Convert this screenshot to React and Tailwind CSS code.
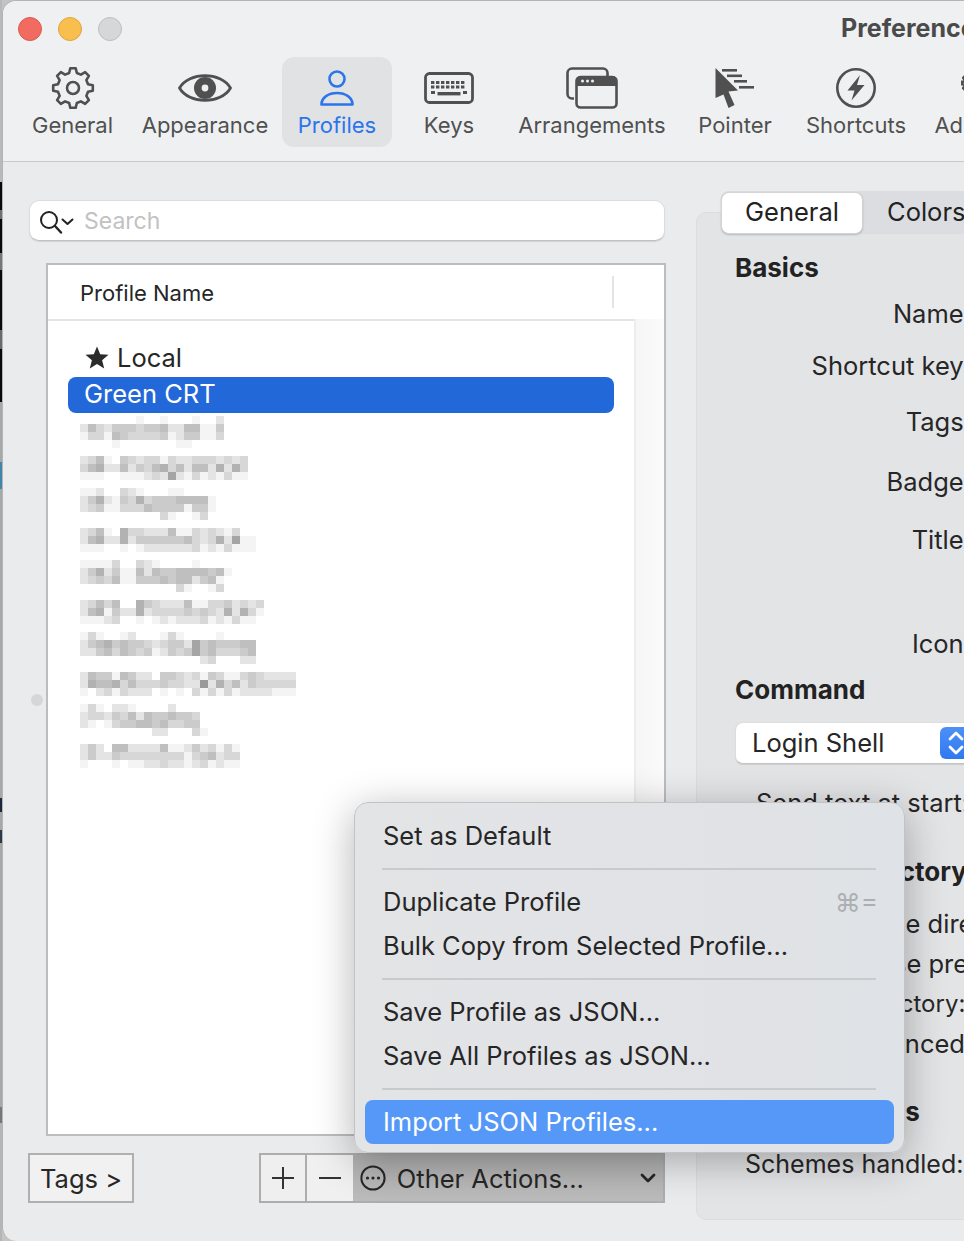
import React from 'react';

// ─── Data ────────────────────────────────────────────────────────────────────

const GREYS = ['#ffffff', '#f4f4f4', '#e4e4e4', '#d7d7d7', '#cbcbcb', '#bfbfbf', '#b2b2b2', '#a5a5a5', '#9a9a9a'];

// redacted profile names, one digit per 8px mosaic cell
const REDACTED = [
  { top: 'pt-[3px]', lines: ['000000010010001002', '253244434452255114', '133154333341244113', '000010000000110000'] },
  { top: 'pt-[7px]', lines: ['235104323313223332323', '356225243563525526263', '111001112327213121311'] },
  { top: 'pt-[3px]', lines: ['1120032100011', '24621436344455551', '23411333544441441', '0000000000310013'] },
  { top: 'pt-[7px]', lines: ['23510633222511323213', '2562262444444532362711', '1110010122222231213111'] },
  { top: 'pt-[3px]', lines: ['111130032100001', '2462411525445555451', '234351144454552451', '000000000000310013'] },
  { top: 'pt-[7px]', lines: ['23535006432225113342323', '25614226233334343262631', '11123001012122231213110'] },
  { top: 'pt-[3px]', lines: ['131001200013100001', '2456454432344274544455', '2245354341243474533345', '0000000000000002300022'] },
  { top: 'pt-[7px]', lines: ['254415422044323143113432222', '265563533343322826352433333', '102313222010103131312222111'] },
  { top: 'pt-[3px]', lines: ['131022100002', '233243525445443', '210134455453344', '0000000002200031'] },
  { top: 'pt-[7px]', lines: ['24205522225112423131', '24224333333331345233', '10001011223221231211'] },
];

// what shows of the desktop behind the window, top to bottom
const DESKTOP_STRIP = [
  'h-[182px] bg-[#b9b9b9]', 'h-[28px] bg-[#0a0a0a]', 'h-[9px] bg-[#6f6f6f]', 'h-[34px] bg-[#0a0a0a]',
  'h-[17px] bg-[#777777]', 'h-[60px] bg-[#0a0a0a]', 'h-[19px] bg-[#6a6a6a]', 'h-[53px] bg-[#0a0a0a]',
  'h-[60px] bg-[#a8a8a8]', 'h-[27px] bg-[#3f86a8]', 'h-[309px] bg-[#a8a8a8]', 'h-[14px] bg-[#1a2a3a]',
  'h-[18px] bg-[#a8a8a8]', 'h-[13px] bg-[#2a3a4a]', 'h-[264px] bg-[#a8a8a8]', 'h-[16px] bg-[#777777]',
  'h-[118px] bg-[#b5b5b5]',
];

// ─── Icons ───────────────────────────────────────────────────────────────────

function gearPath(cx, cy, outer, inner, teeth) {
  const step = (Math.PI * 2) / teeth;
  const pts = [];
  for (let i = 0; i < teeth; i++) {
    const a = i * step - Math.PI / 2;
    [[-0.32, inner], [-0.17, outer], [0.17, outer], [0.32, inner]].forEach(([f, r]) => {
      pts.push(`${(cx + r * Math.cos(a + f * step)).toFixed(2)} ${(cy + r * Math.sin(a + f * step)).toFixed(2)}`);
    });
  }
  return `M${pts.join('L')}Z`;
}

function GearIcon() {
  return (
    <svg width="44" height="44" viewBox="0 0 44 44" fill="none" stroke="#505050" strokeWidth="2.6" strokeLinejoin="round">
      <path d={gearPath(22, 22, 20, 15.5, 8)} />
      <circle cx="22" cy="22" r="6" />
    </svg>
  );
}

function EyeIcon() {
  return (
    <svg width="54" height="34" viewBox="0 0 54 34">
      <path d="M1.5 17C11 0.5 43 0.5 52.5 17C43 33.5 11 33.5 1.5 17Z" fill="none" stroke="#505050" strokeWidth="2.8" strokeLinejoin="round" />
      <circle cx="27" cy="17" r="11" fill="#505050" />
      <circle cx="27" cy="17" r="3.4" fill="#eff0f2" />
    </svg>
  );
}

function PersonIcon() {
  return (
    <svg width="36" height="38" viewBox="0 0 36 38" fill="none" stroke="#2a74ee" strokeWidth="2.6" strokeLinejoin="round">
      <circle cx="18" cy="10" r="7.5" />
      <path d="M2.5 35.5C2.5 28.5 9.5 24 18 24C26.5 24 33.5 28.5 33.5 35.5Z" />
    </svg>
  );
}

function KeyboardIcon() {
  const keys = [];
  [9, 13.5].forEach(y => {
    for (let x = 7; x <= 40; x += 5) keys.push(<rect key={`${x}-${y}`} x={x} y={y} width="3.4" height="3" />);
  });
  return (
    <svg width="50" height="32" viewBox="0 0 50 32" fill="#505050">
      <rect x="1.5" y="1.5" width="47" height="29" rx="4" fill="none" stroke="#505050" strokeWidth="2.8" />
      {keys}
      <rect x="7" y="19" width="4" height="3" />
      <rect x="13.5" y="20" width="23" height="3.4" />
      <rect x="39" y="19" width="4" height="3" />
    </svg>
  );
}

function ArrangeIcon() {
  return (
    <svg width="52" height="42" viewBox="0 0 52 42" fill="none" stroke="#505050" strokeWidth="2.6">
      <path d="M8 31.5H6C3.5 31.5 1.5 29.5 1.5 27V6C1.5 3.5 3.5 1.5 6 1.5H37C39.5 1.5 41.5 3.5 41.5 6V9" />
      <rect x="10.5" y="10" width="40" height="30.5" rx="4" />
      <path d="M10 14C10 11 12 9 14 9H47C49 9 51 11 51 14V19H10Z" fill="#505050" stroke="none" />
      <circle cx="16.5" cy="14" r="1.5" fill="#eff0f2" stroke="none" />
      <circle cx="21.5" cy="14" r="1.5" fill="#eff0f2" stroke="none" />
      <circle cx="26.5" cy="14" r="1.5" fill="#eff0f2" stroke="none" />
    </svg>
  );
}

function PointerIcon() {
  return (
    <svg width="40" height="42" viewBox="0 0 40 42" fill="#505050">
      <path d="M0.5 1L23 23.5L13.5 24.5L19.5 38L13.5 41L8.5 27.5L0.5 31Z" />
      <rect x="7" y="2" width="15" height="2.6" />
      <rect x="12" y="7.5" width="15" height="2.6" />
      <rect x="19" y="13" width="13" height="2.6" />
      <rect x="24" y="19" width="15" height="2.6" />
    </svg>
  );
}

function BoltIcon() {
  return (
    <svg width="42" height="42" viewBox="0 0 42 42">
      <circle cx="21" cy="21" r="18.7" fill="none" stroke="#505050" strokeWidth="2.6" />
      <path d="M25 8L12.5 23.5H19.5L16.5 33.5L29.5 18H22Z" fill="#505050" />
    </svg>
  );
}

function AdvancedIcon() {
  return (
    <svg width="52" height="44" viewBox="0 0 52 44" fill="none" stroke="#505050" strokeWidth="2.6" strokeLinejoin="round">
      <path d={gearPath(9, 17, 8.5, 6, 8)} />
      <circle cx="9" cy="17" r="2.4" />
    </svg>
  );
}

function SearchIcon() {
  return (
    <svg width="36" height="26" viewBox="0 0 36 26" fill="none" stroke="#222222" strokeLinecap="round" strokeLinejoin="round">
      <circle cx="10" cy="10" r="8" strokeWidth="2" />
      <path d="M16 16L22 22.5" strokeWidth="2.4" />
      <path d="M23.5 9.5L28.5 14L33.5 9.5" strokeWidth="2" />
    </svg>
  );
}

function StarIcon() {
  return (
    <svg width="24" height="23" viewBox="0 0 24 23" fill="#2b2b2b">
      <path d="M12 0.5L15.2 8.2L23.5 8.8L17.1 14.2L19.2 22.4L12 18L4.8 22.4L6.9 14.2L0.5 8.8L8.8 8.2Z" />
    </svg>
  );
}

function PlusIcon() {
  return (
    <svg width="22" height="22" viewBox="0 0 22 22" stroke="#333333" strokeWidth="2">
      <path d="M0 11H22M11 0V22" />
    </svg>
  );
}

function MinusIcon() {
  return (
    <svg width="22" height="22" viewBox="0 0 22 22" stroke="#333333" strokeWidth="2">
      <path d="M0 11H22" />
    </svg>
  );
}

function MoreIcon() {
  return (
    <svg width="26" height="26" viewBox="0 0 26 26">
      <circle cx="13" cy="13" r="11.6" fill="none" stroke="#262626" strokeWidth="2" />
      <circle cx="7.5" cy="13" r="1.6" fill="#262626" />
      <circle cx="13" cy="13" r="1.6" fill="#262626" />
      <circle cx="18.5" cy="13" r="1.6" fill="#262626" />
    </svg>
  );
}

function ChevronIcon() {
  return (
    <svg width="16" height="10" viewBox="0 0 16 10" fill="none" stroke="#262626" strokeWidth="2.8" strokeLinecap="round" strokeLinejoin="round">
      <path d="M2 2L8 8L14 2" />
    </svg>
  );
}

function StepperIcon() {
  return (
    <svg width="18" height="28" viewBox="0 0 18 28" fill="none" stroke="#ffffff" strokeWidth="2.8" strokeLinecap="round" strokeLinejoin="round">
      <path d="M3 10L9 4L15 10M3 18L9 24L15 18" />
    </svg>
  );
}

// ─── Sub-components ──────────────────────────────────────────────────────────

function ToolItem({ icon, label, width, active }) {
  return (
    <div className={['flex flex-col items-center shrink-0 h-[90px] pt-[9px] rounded-xl', width, active ? 'bg-[#e1e2e4]' : ''].join(' ')}>
      <div className="h-[44px] flex items-center justify-center">{icon}</div>
      <div className={['h-[30px] leading-[30px] text-[22px] whitespace-nowrap', active ? 'text-[#2a74ee]' : 'text-[#505050]'].join(' ')}>
        {label}
      </div>
    </div>
  );
}

function Mosaic({ top, lines }) {
  const cols = Math.max(...lines.map(l => l.length));
  return (
    <div className={`h-9 pl-[12px] ${top}`}>
      <svg className="block" width={cols * 8} height={lines.length * 8} shapeRendering="crispEdges">
        {lines.map((line, y) =>
          [...line].map((c, x) => (c === '0' ? null : <rect key={`${x}-${y}`} x={x * 8} y={y * 8} width="8" height="8" fill={GREYS[c]} />))
        )}
      </svg>
    </div>
  );
}

function FieldLabel({ children, className }) {
  return <div className={['h-[30px] leading-[30px] w-[274px] text-right whitespace-nowrap', className].join(' ')}>{children}</div>;
}

function Heading({ children, className }) {
  return <div className={['h-[30px] leading-[30px] pl-[38px] text-[26px] font-bold whitespace-nowrap text-[#222222]', className].join(' ')}>{children}</div>;
}

function Option({ children, className }) {
  return <div className={['h-[30px] leading-[30px] whitespace-nowrap', className].join(' ')}>{children}</div>;
}

function MenuItem({ children, shortcut, highlighted }) {
  return (
    <div className={[
      'h-[44px] mx-[10px] pl-[18px] pr-[16px] flex items-center justify-between rounded-lg whitespace-nowrap',
      highlighted ? 'bg-[#5598f8] text-white' : 'text-[#262626]',
    ].join(' ')}>
      <span>{children}</span>
      {shortcut && <span className="text-[#adb0b3] text-[26px]">{shortcut}</span>}
    </div>
  );
}

function MenuSeparator() {
  return (
    <div className="h-[22px] flex items-center">
      <div className="h-[2px] w-[494px] ml-[27px] bg-[#c9cacc]" />
    </div>
  );
}

// ─── Main component ──────────────────────────────────────────────────────────

export default function App() {
  return (
    <div className="relative flex w-[964px] h-[1241px] overflow-hidden bg-[#c4c4c4] font-['Inter','Liberation_Sans',sans-serif] text-[25.5px] text-[#262626]">
      {/* Desktop showing behind the window */}
      <div className="w-[2px] shrink-0 flex flex-col">
        {DESKTOP_STRIP.map((seg, i) => <div key={i} className={seg} />)}
      </div>

      {/* Window */}
      <div className="w-[962px] h-[1241px] shrink-0 flex flex-col overflow-hidden rounded-l-[14px] border-l border-t border-[#b4b4b4] bg-[#eaebed]">
        <div className="bg-[#eff0f2] border-b border-[#c8c9cb] shrink-0">
          {/* Title row */}
          <div className="h-[56px] flex items-center pl-[15px] gap-4">
            <div className="w-6 h-6 rounded-full bg-[#f26b60] border border-[#dc5a50] shrink-0" />
            <div className="w-6 h-6 rounded-full bg-[#f8be4e] border border-[#dfa63e] shrink-0" />
            <div className="w-6 h-6 rounded-full bg-[#d6d7d9] border border-[#bdbec0] shrink-0" />
            <div className="ml-[703px] mt-[-1px] text-[25px] font-bold text-[#4a4a4a] whitespace-nowrap shrink-0">Preferences</div>
          </div>
          {/* Toolbar */}
          <div className="flex pl-[14px] pb-[14px]">
            <ToolItem width="w-[111px]" icon={<GearIcon />} label="General" />
            <ToolItem width="w-[154px]" icon={<EyeIcon />} label="Appearance" />
            <ToolItem width="w-[110px]" icon={<PersonIcon />} label="Profiles" active />
            <ToolItem width="w-[114px]" icon={<KeyboardIcon />} label="Keys" />
            <ToolItem width="w-[172px]" icon={<ArrangeIcon />} label="Arrangements" />
            <ToolItem width="w-[114px]" icon={<PointerIcon />} label="Pointer" />
            <ToolItem width="w-[128px]" icon={<BoltIcon />} label="Shortcuts" />
            <ToolItem width="w-[134px]" icon={<AdvancedIcon />} label="Advanced" />
          </div>
        </div>

        <div className="flex flex-1 min-h-0">
          {/* Left column */}
          <div className="w-[636px] ml-[26px] pt-[38px] shrink-0 flex flex-col">
            <div className="w-[636px] h-[41px] bg-white rounded-[10px] border border-[#dcdcdc] border-b-[#c0c0c0] shadow-[0_1px_1px_rgba(0,0,0,0.1)] flex items-center pl-[9px] gap-[9px]">
              <div className="mt-[4px]"><SearchIcon /></div>
              <span className="mt-[2px] text-[23px] text-[#c2c2c2]">Search</span>
            </div>

            <div className="ml-[17px] mt-[22px] w-[620px] h-[873px] shrink-0 bg-white border-2 border-[#bdbdbd] flex flex-col">
              <div className="w-[587px] h-[56px] shrink-0 border-b-2 border-[#e4e4e4] flex items-center justify-between pl-[32px] pr-[21px]">
                <span className="mt-[3px] text-[22px]">Profile Name</span>
                <div className="w-[2px] h-[32px] bg-[#e4e4e4]" />
              </div>
              <div className="flex flex-1 min-h-0">
                <div className="w-[586px] pl-[20px] pt-[19px]">
                  <div className="h-[37px] pl-[17px] flex items-center gap-[8px]">
                    <div className="mt-[-2px]"><StarIcon /></div>
                    <span>Local</span>
                  </div>
                  <div className="w-[546px] h-9 pl-[16px] pb-[2px] flex items-center rounded-lg bg-[#2268d8] text-white">Green CRT</div>
                  {REDACTED.map((row, i) => <Mosaic key={i} top={row.top} lines={row.lines} />)}
                </div>
                <div className="flex-1 mt-[-2px] border-l-2 border-[#ededed] bg-gradient-to-r from-[#f6f6f6] to-[#fbfbfb]" />
              </div>
            </div>

            <div className="flex mt-[17px]">
              <div className="w-[106px] h-[50px] ml-[-1px] pt-[3px] border-2 border-[#b0b0b0] bg-[#f1f1f1] flex items-center pl-[10px] whitespace-nowrap">Tags &gt;</div>
              <div className="ml-[125px] w-[407px] h-[50px] border-2 border-[#adadad] flex bg-[#b9b9b9]">
                <div className="w-[46px] bg-[#efefef] border-r-2 border-[#adadad] flex items-center justify-center"><PlusIcon /></div>
                <div className="w-[46px] bg-[#f0f0f0] flex items-center justify-center"><MinusIcon /></div>
                <div className="flex-1 flex items-center pl-[7px] pr-[7px] bg-gradient-to-b from-[#b0b0b0] to-[#bcbcbc]">
                  <MoreIcon />
                  <span className="ml-[11px] mt-[3px] whitespace-nowrap">Other Actions...</span>
                  <div className="ml-auto"><ChevronIcon /></div>
                </div>
              </div>
            </div>
          </div>

          {/* Right column */}
          <div className="ml-[31px] w-[420px] shrink-0 pt-[29px] flex flex-col">
            <div className="relative z-10 ml-[25px] h-[43px] w-[300px] bg-[#dcdde0] rounded-lg flex items-center shrink-0">
              <div className="w-[142px] h-[42px] bg-white rounded-lg border border-[#d4d4d4] shadow-[0_1px_2px_rgba(0,0,0,0.2)] flex items-center justify-center text-[#222222]">General</div>
              <span className="ml-[24px] text-[#222222]">Colors</span>
            </div>
            <div className="mt-[-22px] h-[1008px] shrink-0 rounded-[10px] border border-[#dcdde0] bg-[#e3e4e6] pt-[40px]">
              <Heading>Basics</Heading>
              <FieldLabel className="mt-[16px]">Name:</FieldLabel>
              <FieldLabel className="mt-[22px]">Shortcut key:</FieldLabel>
              <FieldLabel className="mt-[26px]">Tags:</FieldLabel>
              <FieldLabel className="mt-[30px]">Badge:</FieldLabel>
              <FieldLabel className="mt-[28px]">Title:</FieldLabel>
              <FieldLabel className="mt-[74px]">Icon:</FieldLabel>
              <Heading className="mt-[16px]">Command</Heading>
              <div className="mt-[17px] ml-[38px] w-[360px] h-[42px] bg-white rounded-lg border border-[#dedede] border-b-[#c4c4c4] shadow-[0_1px_1px_rgba(0,0,0,0.1)] flex items-center pl-[16px]">
                <span className="w-[188px] shrink-0">Login Shell</span>
                <div className="w-[32px] h-[32px] rounded-md bg-gradient-to-b from-[#4d90f7] to-[#2f78f0] flex items-center justify-center"><StepperIcon /></div>
              </div>
              <div className="mt-[24px] ml-[59px] h-[30px] leading-[30px] whitespace-nowrap">Send text at start:</div>
              <Heading className="mt-[39px]">Working Directory</Heading>
              <Option className="mt-[22px] pl-[152px]">Home directory</Option>
              <Option className="mt-[10px] pl-[150px]">Reuse previous session's directory</Option>
              <Option className="mt-[10px] pl-[157px] text-[24px]">Directory:</Option>
              <Option className="mt-[10px] pl-[146px]">Advanced Configuration</Option>
              <Heading className="mt-[38px] ml-[10px]">URL Schemes</Heading>
              <div className="mt-[22px] ml-[48px] h-[30px] leading-[30px] text-[25px] whitespace-nowrap">Schemes handled:</div>
            </div>
          </div>
        </div>
      </div>

      {/* Split view handle */}
      <div className="absolute left-[31px] top-[694px] w-3 h-3 rounded-full bg-[#d6d6d8]" />

      {/* Other Actions menu */}
      <div className="absolute left-[354px] top-[802px] w-[551px] h-[351px] pt-[11px] rounded-[14px] border border-[#c2c3c5] bg-gradient-to-r from-[#e3e4e6] to-[#dfe2e6] shadow-[0_8px_40px_rgba(0,0,0,0.3)]">
        <MenuItem>Set as Default</MenuItem>
        <MenuSeparator />
        <MenuItem shortcut="⌘=">Duplicate Profile</MenuItem>
        <MenuItem>Bulk Copy from Selected Profile...</MenuItem>
        <MenuSeparator />
        <MenuItem>Save Profile as JSON...</MenuItem>
        <MenuItem>Save All Profiles as JSON...</MenuItem>
        <MenuSeparator />
        <MenuItem highlighted>Import JSON Profiles...</MenuItem>
      </div>
    </div>
  );
}
